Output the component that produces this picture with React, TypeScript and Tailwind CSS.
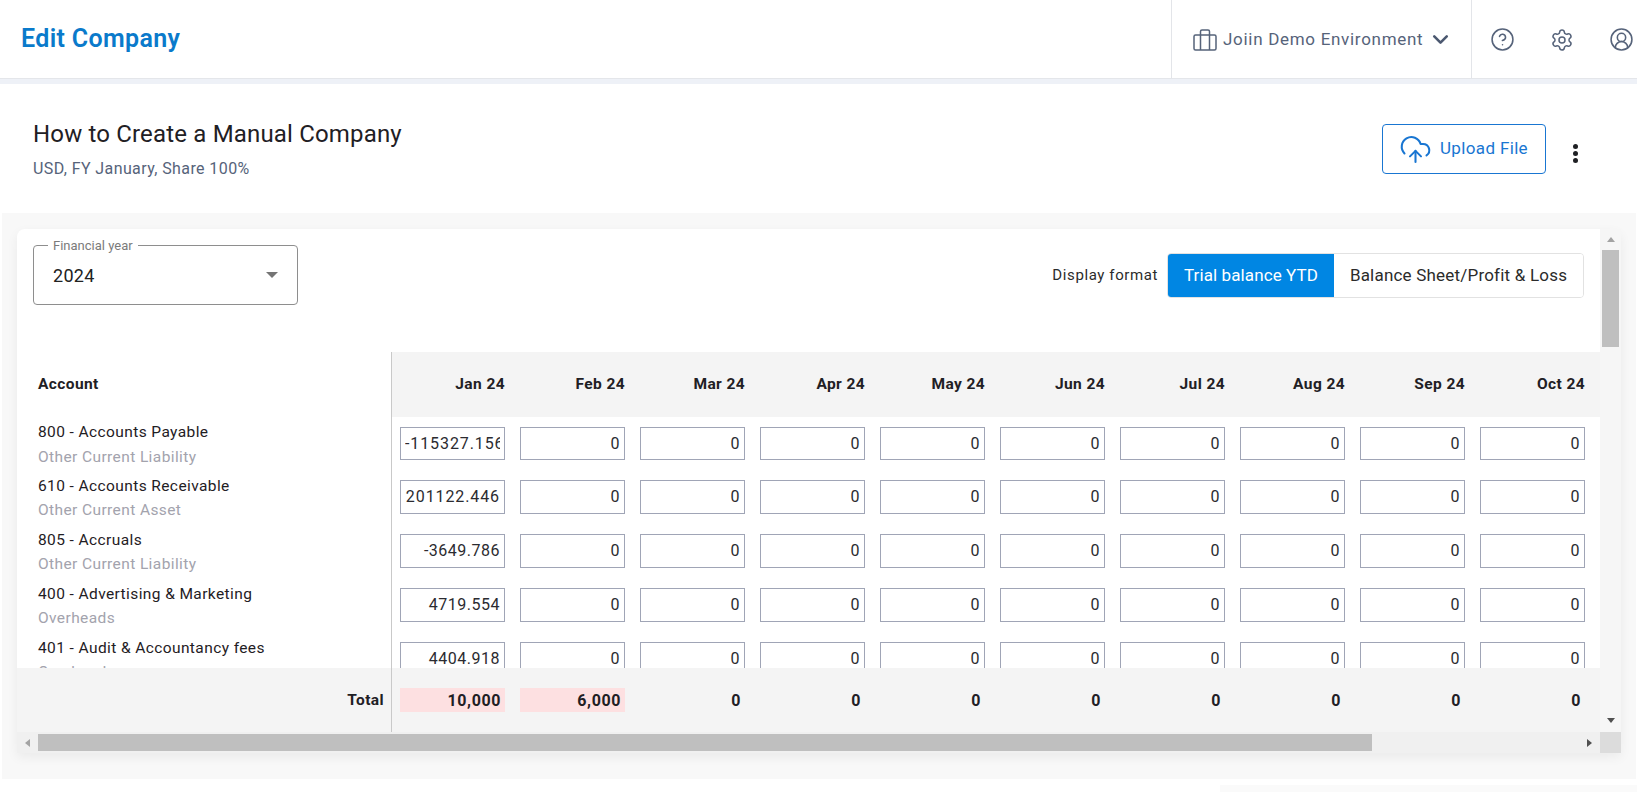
import { ChevronDown, CircleHelp, CircleUserRound, CloudUpload, Settings } from "lucide-react";

const months = ["Jan 24", "Feb 24", "Mar 24", "Apr 24", "May 24", "Jun 24", "Jul 24", "Aug 24", "Sep 24", "Oct 24"];

const rows = [
  { name: "800 - Accounts Payable", type: "Other Current Liability", first: "-115327.156" },
  { name: "610 - Accounts Receivable", type: "Other Current Asset", first: "201122.446" },
  { name: "805 - Accruals", type: "Other Current Liability", first: "-3649.786" },
  { name: "400 - Advertising & Marketing", type: "Overheads", first: "4719.554" },
  { name: "401 - Audit & Accountancy fees", type: "Overheads", first: "4404.918" },
];

const totals = ["10,000", "6,000", "0", "0", "0", "0", "0", "0", "0", "0"];

function CaseIcon() {
  return (
    <svg width="24" height="22" viewBox="0 0 24 22" fill="none" stroke="#56637a" strokeWidth="1.5" strokeLinejoin="round">
      <rect x="1" y="6" width="22" height="15" rx="1.5" />
      <path d="M7.5 6V21M16.5 6V21M7.5 6V2.5A1.5 1.5 0 0 1 9 1H15A1.5 1.5 0 0 1 16.5 2.5V6" />
    </svg>
  );
}

function Header() {
  return (
    <header className="flex h-[84px] items-stretch border-b-[5px] border-[#eef1f7] bg-white shadow-[inset_0_-1px_0_#e4e6ea]">
      <h1 className="flex flex-1 items-center pb-[1px] pl-[21px] text-[25px] font-semibold tracking-[0.35px] text-[#0a7acb]">
        Edit Company
      </h1>
      <div className="flex w-[301px] items-center gap-[6px] border-x border-[#e3e5e9] pl-[21px] text-[#56637a]">
        <CaseIcon />
        <span className="text-[17px] tracking-[0.7px]">Joiin Demo Environment</span>
        <ChevronDown size={25} strokeWidth={2.5} className="ml-[-1px] text-[#4b5870]" />
      </div>
      <div className="flex w-[165px] items-center gap-[35px] pl-[18px] text-[#56637a]">
        <CircleHelp size={25} strokeWidth={1.5} />
        <Settings size={24} strokeWidth={1.5} />
        <CircleUserRound size={25} strokeWidth={1.5} />
      </div>
    </header>
  );
}

function TitleBar() {
  return (
    <div className="flex h-[129px] items-start justify-between bg-white pl-[33px]">
      <div className="pt-[32px]">
        <h2 className="text-[24px] leading-[36px] tracking-[0.17px] text-[#1f2024]">How to Create a Manual Company</h2>
        <p className="mt-[6px] text-[16px] leading-[22px] tracking-[0.4px] text-[#56637a]">USD, FY January, Share 100%</p>
      </div>
      <div className="flex items-start pr-[59px] pt-[40px]">
        <button className="flex h-[50px] w-[164px] items-center gap-[8px] rounded-[4px] border border-[#1976d2] pl-[16px] text-[#1976d2]">
          <CloudUpload size={33} strokeWidth={1.5} />
          <span className="text-[17px] tracking-[0.35px]">Upload File</span>
        </button>
        <div className="ml-[27px] mt-[20px] flex flex-col gap-[2px]">
          <span className="h-[5px] w-[5px] rounded-full bg-[#1f2024]" />
          <span className="h-[5px] w-[5px] rounded-full bg-[#1f2024]" />
          <span className="h-[5px] w-[5px] rounded-full bg-[#1f2024]" />
        </div>
      </div>
    </div>
  );
}

function Toolbar() {
  return (
    <div className="flex h-[123px] items-start justify-between pl-[16px] pr-[16px] pt-[16px]">
      <div className="relative flex h-[60px] w-[265px] items-center justify-between rounded-[4px] border border-[#8e8e8e] pl-[19px] pr-[19px]">
        <span className="absolute left-[14px] top-[-8px] bg-white px-[5px] text-[13px] leading-[15px] text-[#7b7b7b]">
          Financial year
        </span>
        <span className="text-[18px] tracking-[0.3px] text-[#222]">2024</span>
        <span className="h-0 w-0 border-x-[6.5px] border-t-[6.5px] border-x-transparent border-t-[#757575]" />
      </div>
      <div className="mt-[8px] flex items-center gap-[9px]">
        <span className="text-[15px] tracking-[0.6px] text-[#2b2b2b]">Display format</span>
        <div className="flex h-[45px] overflow-hidden rounded-[4px] border border-[#e2e2e2] text-[17px]">
          <span className="flex w-[166px] items-center justify-center bg-[#0086e3] tracking-[0.1px] text-white">
            Trial balance YTD
          </span>
          <span className="flex w-[249px] items-center justify-center bg-white tracking-[0.2px] text-[#2b2b2b]">
            Balance Sheet/Profit &amp; Loss
          </span>
        </div>
      </div>
    </div>
  );
}

function Table() {
  return (
    <div className="flex flex-col">
      <div className="flex h-[65px]">
        <div className="flex w-[375px] items-center border-r border-[#c9c9c9] pt-[1px] pl-[21px] text-[15.5px] font-bold tracking-[0.4px] text-[#1f2024]">
          Account
        </div>
        <div className="flex flex-1 items-center gap-[15px] bg-[#f4f4f4] pt-[1px] pl-[8px]">
          {months.map((m) => (
            <span key={m} className="w-[105px] text-right text-[15.5px] font-bold tracking-[0.4px] text-[#1f2024]">
              {m}
            </span>
          ))}
        </div>
      </div>
      <div className="h-[251px] overflow-hidden">
        {rows.map((row, r) => (
          <div key={row.name} className="flex h-[54px]">
            <div className="flex w-[375px] flex-col border-r border-[#c9c9c9] pl-[21px] text-[15.5px] tracking-[0.4px]">
              <span className="mt-[5px] leading-[20px] text-[#1f2024]">{row.name}</span>
              <span className={`${r === 0 ? "mt-[5px]" : "mt-[4px]"} leading-[20px] text-[#a3a3ad]`}>{row.type}</span>
            </div>
            <div className={`flex flex-1 gap-[15px] pl-[8px] ${r === 0 ? "pt-[10px]" : "pt-[9px]"}`}>
              {months.map((m, i) => (
                <div
                  key={m}
                  className={`flex w-[105px] items-center border border-[#a0a5b6] px-[4px] text-[16px] text-[#2b2b30] ${
                    r === 0 ? "h-[33px]" : "h-[34px]"
                  } ${i === 0 && r < 2 ? "tracking-[0.9px]" : "tracking-[0.5px]"}`}
                >
                  <span className="block w-full overflow-hidden whitespace-nowrap text-right">
                    {i === 0 ? row.first : "0"}
                  </span>
                </div>
              ))}
            </div>
          </div>
        ))}
      </div>
      <div className="flex h-[64px] bg-[#f4f4f4]">
        <div className="flex w-[375px] items-center justify-end border-r border-[#c9c9c9] pr-[7px] pt-[1px] text-[15.5px] font-bold tracking-[0.4px] text-[#1f2024]">
          Total
        </div>
        <div className="flex flex-1 items-center gap-[15px] pl-[8px]">
          {totals.map((t, i) => (
            <span
              key={i}
              className={`flex h-[24px] w-[105px] items-center justify-end pr-[4px] pt-[1px] text-[16px] font-bold tracking-[0.6px] text-[#1f2024] ${
                i < 2 ? "bg-[#fde0e1]" : ""
              }`}
            >
              {t}
            </span>
          ))}
        </div>
      </div>
    </div>
  );
}

function VerticalScrollbar() {
  return (
    <div className="flex w-[21px] flex-col items-center bg-[#f6f6f6]">
      <span className="mt-[8px] h-0 w-0 border-x-[4.5px] border-b-[5px] border-x-transparent border-b-[#a3a3a3]" />
      <div className="mt-[8px] h-[97px] w-[17px] bg-[#bfbfbf]" />
      <span className="mt-auto mb-[9px] h-0 w-0 border-x-[4.5px] border-t-[5px] border-x-transparent border-t-[#505050]" />
    </div>
  );
}

function HorizontalScrollbar() {
  return (
    <div className="flex h-[21px]">
      <div className="flex flex-1 items-center bg-[#f0f0f0] pl-[8px] pr-[8px]">
        <span className="h-0 w-0 border-y-[4.5px] border-r-[5px] border-y-transparent border-r-[#a3a3a3]" />
        <div className="ml-[8px] h-[17px] w-[1334px] bg-[#bfbfbf]" />
        <span className="ml-auto h-0 w-0 border-y-[4.5px] border-l-[5px] border-y-transparent border-l-[#505050]" />
      </div>
      <div className="w-[21px] bg-[#dcdcdc]" />
    </div>
  );
}

export default function App() {
  return (
    <div className="h-[792px] w-[1637px] overflow-hidden bg-white font-['Roboto',sans-serif]">
      <Header />
      <TitleBar />
      <section className="ml-[2px] mr-[1px] h-[566px] bg-[#f8f8f8] pl-[15px] pt-[16px]">
        <div className="w-[1604px] rounded-t-[8px] bg-white shadow-[0_4px_12px_rgba(0,0,0,0.06)]">
          <div className="flex h-[503px]">
            <div className="flex-1">
              <Toolbar />
              <Table />
            </div>
            <VerticalScrollbar />
          </div>
          <HorizontalScrollbar />
        </div>
      </section>
      <div className="ml-auto mt-[6px] h-[7px] w-[417px] bg-[#fafafa]" />
    </div>
  );
}
